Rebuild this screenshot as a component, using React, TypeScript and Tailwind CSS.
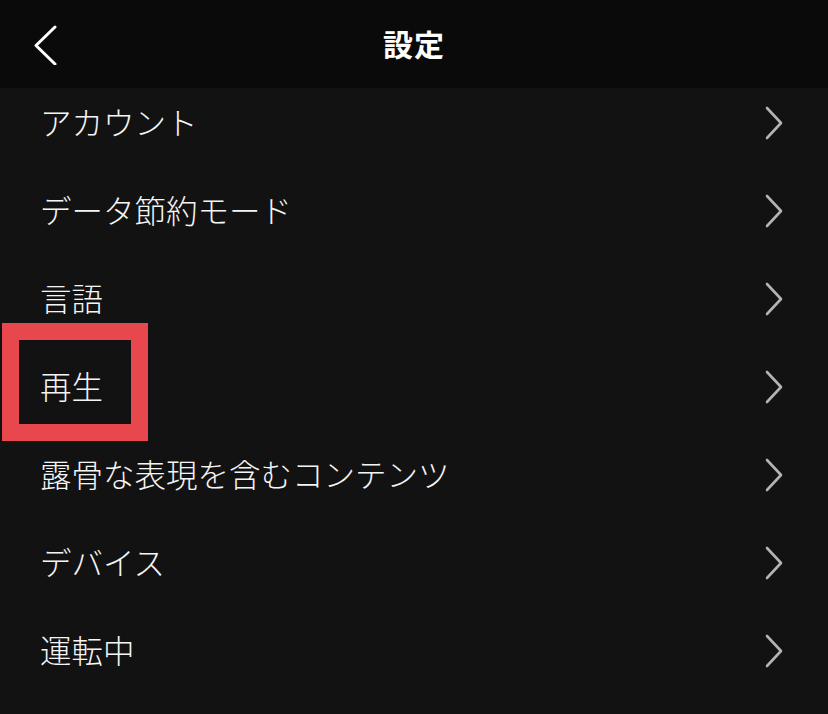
import React from 'react';

const ITEMS = [
  'アカウント',
  'データ節約モード',
  '言語',
  '再生',
  '露骨な表現を含むコンテンツ',
  'デバイス',
  '運転中',
];

const FONT = { fontFamily: '"Noto Sans CJK JP", "Noto Sans", sans-serif' };

function Chevron({ className }: { className?: string }) {
  return (
    <svg width="20" height="34" viewBox="0 0 20 34" fill="none" className={className}>
      <path d="M3 2 L17 17 L3 32" stroke="currentColor" strokeWidth="2.6" strokeLinecap="round" strokeLinejoin="round" />
    </svg>
  );
}

export default function App() {
  return (
    <div className="relative w-[828px] h-[714px] overflow-hidden bg-[#121212] text-white" style={FONT}>
      <header className="relative h-[88px] bg-[#0a0a0a] flex items-center justify-center">
        <button className="absolute left-[33px] top-[25px] text-white">
          <svg width="24" height="40" viewBox="0 0 24 40" fill="none">
            <path d="M22 2 L3 20.5 L22 39" stroke="currentColor" strokeWidth="3" strokeLinecap="round" strokeLinejoin="round" />
          </svg>
        </button>
        <h1 className="text-[30px] font-bold leading-none tracking-[1px] pb-[2px]">設定</h1>
      </header>

      <ul>
        {ITEMS.map((item) => (
          <li key={item} className="h-[88px] flex items-center justify-between pl-[40px] pr-[44px] pb-[20px]">
            <span className="text-[31.5px] font-light leading-none text-[#f5f5f5]">{item}</span>
            <Chevron className="text-[#b3b3b3] mt-[2px]" />
          </li>
        ))}
      </ul>

      <div className="absolute left-[2px] top-[323px] w-[146px] h-[118px] border-[17px] border-[#e8474d]" />
    </div>
  );
}
